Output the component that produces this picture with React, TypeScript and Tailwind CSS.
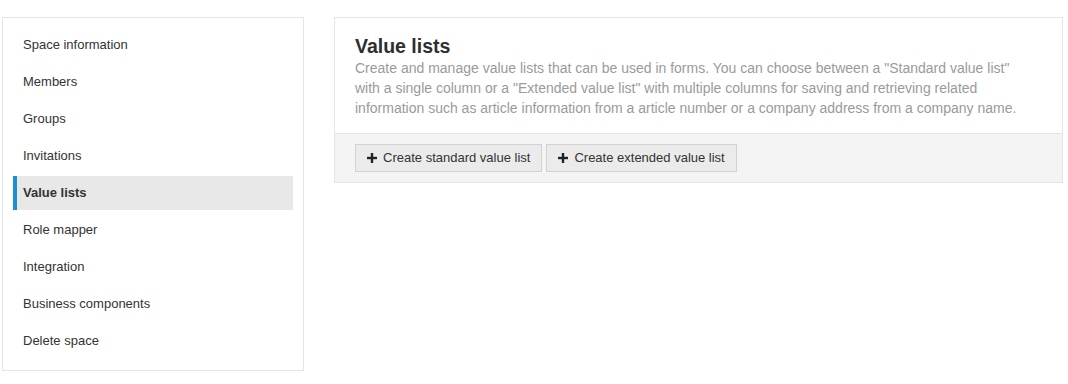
import React from 'react';

const items = [
    'Space information',
    'Members',
    'Groups',
    'Invitations',
    'Value lists',
    'Role mapper',
    'Integration',
    'Business components',
    'Delete space',
];

const PlusIcon: React.FC = () => (
    <svg width="10" height="10" viewBox="0 0 10 10" className="shrink-0">
        <rect x="3.8" y="0" width="2.4" height="10" fill="#222" />
        <rect x="0" y="3.8" width="10" height="2.4" fill="#222" />
    </svg>
);

const App: React.FC = () => {
    const active = 'Value lists';

    return (
        <div
            className="w-[1068px] h-[384px] bg-white flex items-start gap-[30px] pl-[2px] pt-[17px] overflow-hidden"
            style={{ fontFamily: '"Liberation Sans", Arial, sans-serif' }}
        >
            {/* Sidebar */}
            <div className="w-[302px] border border-[#e5e5e5] pt-[10px] pb-[12px] px-[10px] flex flex-col gap-[3px]">
                {items.map((item) => {
                    const isActive = item === active;
                    return (
                        <div
                            key={item}
                            className={
                                isActive
                                    ? 'h-[34px] flex items-center pl-[6px] border-l-4 border-[#1b8fd2] bg-[#e8e8e8] text-[13px] font-bold text-[#333]'
                                    : 'h-[34px] flex items-center pl-[10px] text-[13px] text-[#333]'
                            }
                        >
                            {item}
                        </div>
                    );
                })}
            </div>

            {/* Main panel */}
            <div className="w-[729px] border border-[#e5e5e5]">
                <div className="px-[20px] pt-[17px] pb-[15px]">
                    <h1 className="text-[19.5px] leading-[23px] font-bold text-[#2e2e2e]">Value lists</h1>
                    <p className="max-w-[676px] text-[14px] leading-[20px] text-[#9a9a9a]">
                        Create and manage value lists that can be used in forms. You can choose between a "Standard value list"
                        with a single column or a "Extended value list" with multiple columns for saving and retrieving related
                        information such as article information from a article number or a company address from a company name.
                    </p>
                </div>
                <div className="border-t border-[#e5e5e5] bg-[#f4f4f4] px-[20px] pt-[10px] pb-[10px] flex gap-[4px]">
                    <button className="h-[28px] px-[11px] flex items-center gap-[6px] bg-[#ebebeb] border border-[#d2d2d2] text-[13px] text-[#333]">
                        <PlusIcon />
                        Create standard value list
                    </button>
                    <button className="h-[28px] px-[11px] flex items-center gap-[6px] bg-[#ebebeb] border border-[#d2d2d2] text-[13px] text-[#333]">
                        <PlusIcon />
                        Create extended value list
                    </button>
                </div>
            </div>
        </div>
    );
};

export default App;
